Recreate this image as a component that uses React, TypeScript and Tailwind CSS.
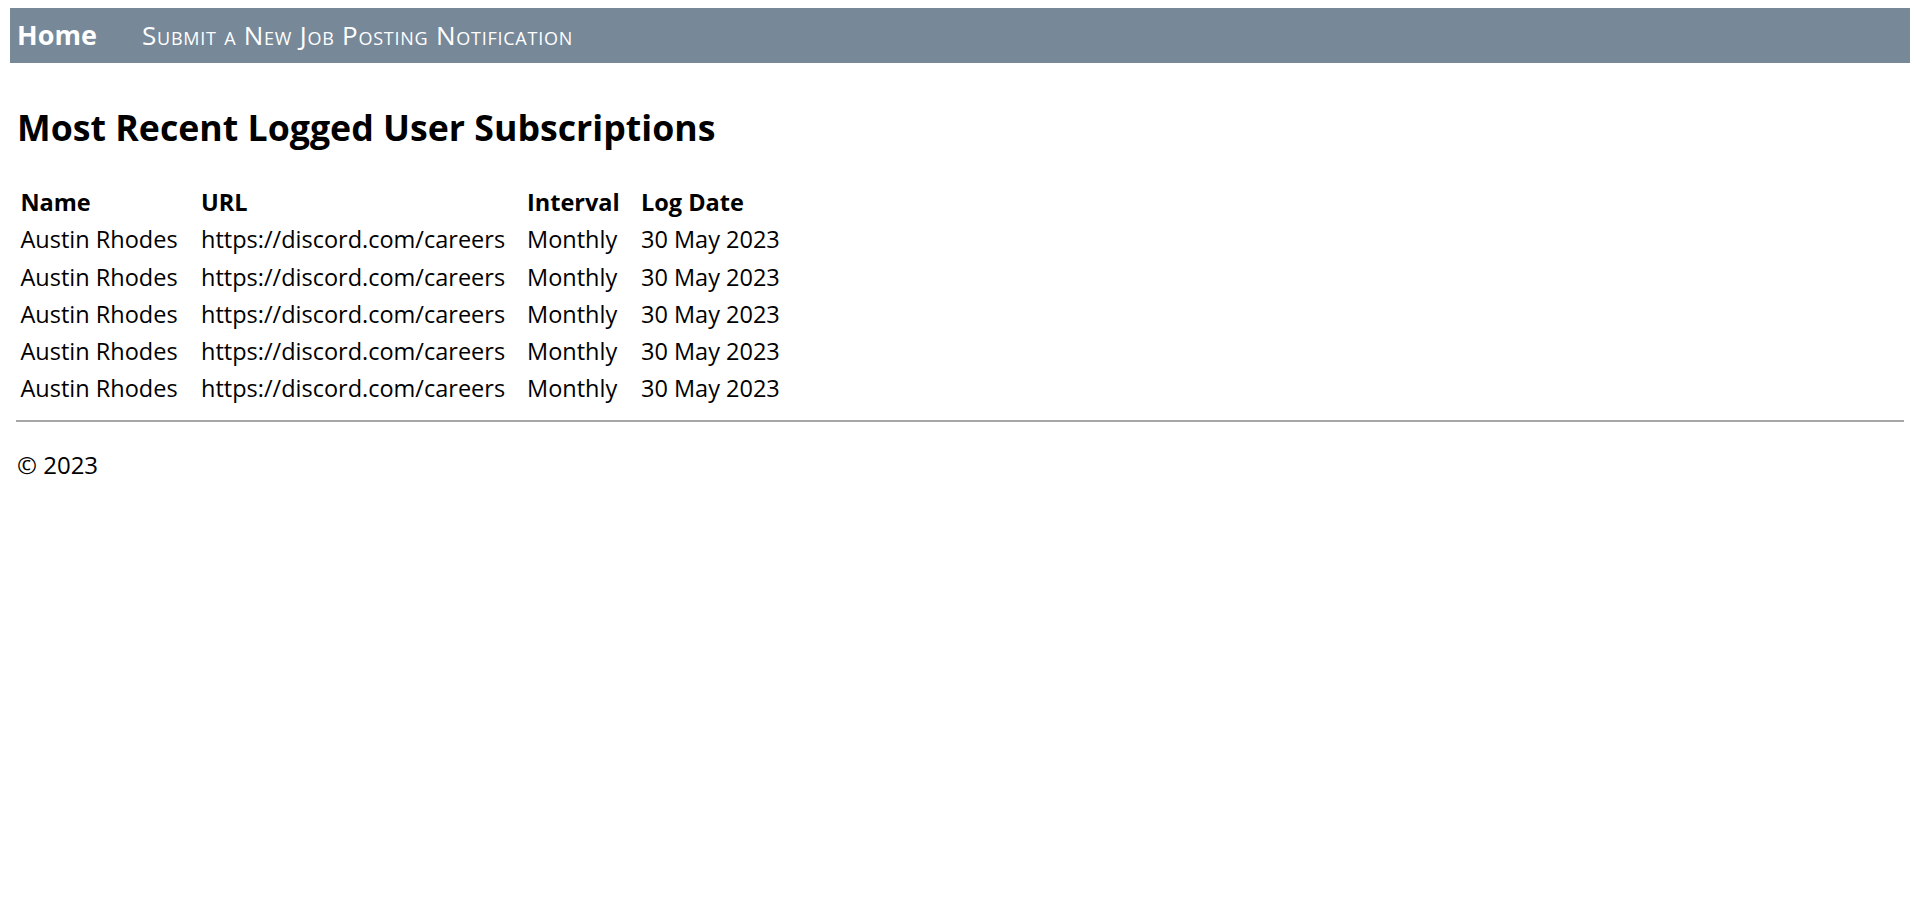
import React from "react";

const rows = Array.from({ length: 5 }, () => ({
  name: "Austin Rhodes",
  url: "https://discord.com/careers",
  interval: "Monthly",
  date: "30 May 2023",
}));

export default function App() {
  return (
    <div
      className="min-h-[897px] bg-white px-[10px] pt-[8px] text-black"
      style={{ fontFamily: '"Open Sans", "Noto Sans", sans-serif' }}
    >
      <nav className="flex h-[55px] items-baseline bg-[#778899] pl-[7px] pt-[13px] text-white">
        <a className="w-[125px] text-[27px] font-bold leading-[27px]">Home</a>
        <a className="text-[26px] leading-[27px] tracking-[0.75px] [font-variant:small-caps]">
          Submit a New Job Posting Notification
        </a>
      </nav>

      <h1 className="ml-[7px] mt-[42.5px] text-[35.7px] font-bold leading-[42px]">
        Most Recent Logged User Subscriptions
      </h1>

      <div className="ml-[10.5px] mt-[36.5px] grid grid-cols-[180.5px_326px_114px_auto] text-[23.5px] leading-[37.3px] whitespace-nowrap">
        <div className="font-bold">Name</div>
        <div className="font-bold">URL</div>
        <div className="font-bold">Interval</div>
        <div className="font-bold">Log Date</div>
        {rows.map((r, i) => (
          <React.Fragment key={i}>
            <div>{r.name}</div>
            <div>{r.url}</div>
            <div>{r.interval}</div>
            <div>{r.date}</div>
          </React.Fragment>
        ))}
      </div>

      <div className="mx-[6px] mt-[12.5px] h-[2px] bg-[#a6a6a6]" />

      <footer className="ml-[7px] mt-[27px] text-[24px] leading-[32px]">© 2023</footer>
    </div>
  );
}
